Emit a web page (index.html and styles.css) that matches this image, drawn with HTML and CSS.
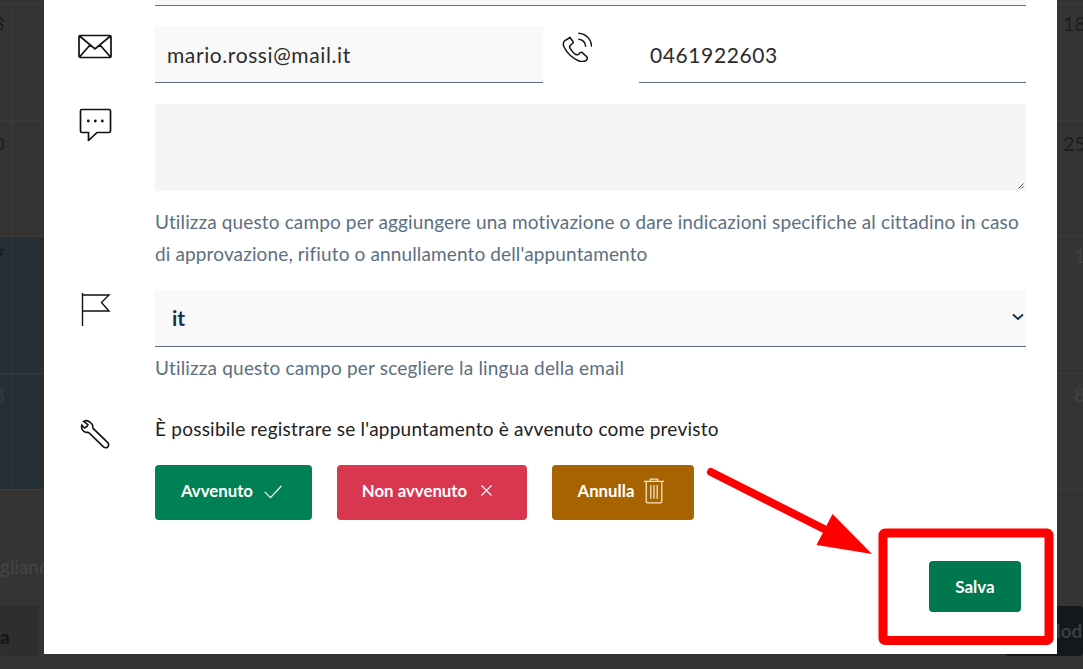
FILE: index.html
```html
<!DOCTYPE html>
<html lang="it">
<head>
<meta charset="utf-8">
<title>Appuntamento</title>
<link rel="stylesheet" href="styles.css">
</head>
<body>
<div class="page">
  <div class="backdrop">
    <div class="bg-table">
      <div class="bg-row r0"></div>
      <div class="bg-row r1"><div class="cell first"><span class="num">3</span></div><div class="cell second"></div><div class="cell last"><span class="num">18</span></div></div>
      <div class="bg-row r2"><div class="cell first"><span class="num">0</span></div><div class="cell second"></div><div class="cell last"><span class="num">25</span></div></div>
      <div class="bg-row r3"><div class="cell first blue"><span class="num">7</span></div><div class="cell second blue"></div><div class="cell last"><span class="num faint">1</span></div></div>
      <div class="bg-row r4"><div class="cell first blue"><span class="num faint-blue">8</span></div><div class="cell second blue"></div><div class="cell last"><span class="num faint">8</span></div></div>
    </div>
    <div class="bg-footer">
      <p class="bg-note">gliano</p>
      <div class="bg-actions">
        <div class="bg-btn left">a</div>
        <div class="bg-btn right">Modifica</div>
      </div>
    </div>
  </div>

  <div class="modal">
    <div class="field-tail"></div>

    <div class="row contact">
      <svg class="icon" viewBox="0 0 34 34"><path d="M2 6.500h30a1.300 1.300 0 0 1 1 1.200v19.600a1.300 1.300 0 0 1-1 1.200H2a1.300 1.300 0 0 1-1-1.200V7.700a1.300 1.300 0 0 1 1-1.200zM1.500 7l15.500 13L32.500 7M1.500 28l10.500-12M32.500 28L22 16"/></svg>
      <div class="input email">mario.rossi@mail.it</div>
      <svg class="icon phone" viewBox="0 0 30 30"><path d="M8 5.500 3 8.500C1 10 .8 12 2 15c3 6 8 11 15 14 3 1 6 .5 7.500-1 1-1 1-2 .5-3l-5-4.500c-1-.5-2 0-3 1.500-1 1-2 1-3 .5-3-1.500-6-5.500-6.500-8 0-1 1-1.500 2.500-2.500 1.500-1 1.500-1.500 1-2.500z"/><path d="M16.300 7.300c4.200.3 7.100 3.200 7.400 7.400M16.300 1.300c7.700.5 12.900 5.700 13.400 13.400"/></svg>
      <div class="input tel">0461922603</div>
    </div>

    <div class="row message">
      <svg class="icon" viewBox="0 0 34 34"><path d="M4 2.500h27a1.500 1.500 0 0 1 1.500 1.500v20a1.500 1.500 0 0 1-1.500 1.500H19l-8.500 8v-8H4A1.500 1.500 0 0 1 2.500 24V4A1.500 1.500 0 0 1 4 2.500z"/><circle class="dot" cx="10.300" cy="14" r="1.400"/><circle class="dot" cx="17.300" cy="14" r="1.400"/><circle class="dot" cx="24.300" cy="14" r="1.400"/></svg>
      <div class="body">
        <div class="textarea"><svg class="grip" viewBox="0 0 6 6"><path d="M5.500.5.500 5.500M5.500 3.500l-2 2"/></svg></div>
        <p class="help two-line">Utilizza questo campo per aggiungere una motivazione o dare indicazioni specifiche al cittadino in caso di approvazione, rifiuto o annullamento dell'appuntamento</p>
      </div>
    </div>

    <div class="row language">
      <svg class="icon flag" viewBox="0 0 34 34"><path d="M4.500 1v34M4.500 3H31l-7.500 7.500L31 19H4.500"/></svg>
      <div class="body">
        <div class="select"><span>it</span><svg class="chevron" viewBox="0 0 12 8"><path d="M1 1.500 6 6l5-4.500"/></svg></div>
        <p class="help">Utilizza questo campo per scegliere la lingua della email</p>
      </div>
    </div>

    <div class="row outcome">
      <svg class="icon" viewBox="-2 2 36 36"><path d="M11 5.500C9 3.800 6.200 3.200 4 4.500L8.500 8 7.500 10 5 11.500 2 8.500c-1 4 1.500 7 4 7.500 1.500.3 2.500 0 3.500.5l15.500 15c1.500 1.300 4 1.300 4.800-.3 1-1.500.7-3.300-.8-4.700L14 12c-.5-1-.5-1.800-.5-3 0-1-1-2.300-2.500-3.500z"/></svg>
      <div class="body">
        <p class="question">È possibile registrare se l'appuntamento è avvenuto come previsto</p>
        <div class="actions">
          <div class="btn green">Avvenuto <svg class="btn-icon" viewBox="0 0 24 24"><path d="M2 13l7 7L22 6"/></svg></div>
          <div class="btn red">Non avvenuto <svg class="btn-icon small" viewBox="0 0 24 24"><path d="M4 4l16 16M20 4 4 20"/></svg></div>
          <div class="btn amber">Annulla <svg class="btn-icon trash" viewBox="0 0 24 28"><path d="M1 4h22M8 4V1.500h8V4M3.500 4v22a1.500 1.500 0 0 0 1.500 1.500h14a1.500 1.500 0 0 0 1.500-1.500V4M8.500 8v15M12 8v15M15.500 8v15"/></svg></div>
        </div>
      </div>
    </div>

    <div class="footer"><div class="btn save">Salva</div></div>
  </div>

  <svg class="annotation" viewBox="0 0 1083 669">
    <path class="arrow-line" d="M711 472 830 532"/>
    <path class="arrow-head" d="M832.500 514 872 554 816.500 545z"/>
    <rect class="frame" x="883" y="533" width="166" height="107.500" rx="2"/>
  </svg>
</div>
</body>
</html>
```

FILE: styles.css
```css
* { box-sizing: border-box; }
html, body { margin: 0; padding: 0; height: 100%; }
body { font-family: "Lato", "Liberation Sans", sans-serif; overflow: hidden; background: #343434; }
p { margin: 0; }

.page { position: relative; width: 1083px; height: 669px; overflow: hidden; }

/* dimmed page behind the dialog */
.backdrop { display: flex; flex-direction: column; height: 100%; background: #343434; color: #1d1d1d; }
.bg-row { display: flex; justify-content: space-between; border-bottom: 1px solid #3b3b3b; }
.r0 { height: 5px; }
.r1 { height: 116px; }
.r2 { height: 116px; }
.r3 { height: 137px; }
.r4 { height: 116px; }
.cell { font-size: 20px; line-height: 24px; padding-top: 6px; overflow: hidden; }
.first { width: 12px; border-right: 1px solid #3a3a3a; }
.first .num { display: block; margin-left: -7px; }
.second { flex: 1; max-width: 600px; margin-right: auto; }
.last { width: 26px; white-space: nowrap; padding-left: 6px; }
.blue { background: #262e36; border-color: #2c343c; }
.faint { color: #424242; }
.faint-blue { color: #343c46; }
.r3 .last, .r4 .last { padding-left: 17px; }
.r4 .cell { padding-top: 8px; }
.r2 .cell { padding-top: 10px; }
.r1 .cell { padding-top: 6px; }
.bg-footer { flex: 1; display: flex; flex-direction: column; padding-top: 65px; }
.bg-note { font-size: 19px; line-height: 24px; color: #464646; }
.bg-actions { display: flex; justify-content: space-between; margin-top: 27px; }
.bg-btn { height: 50px; border-radius: 4px; font-size: 19px; font-weight: 700; }
.bg-btn.left { width: 39px; background: #2e2e2e; color: #141414; text-align: right; padding-right: 31px; line-height: 62px; }
.bg-btn.right { width: 78px; padding-left: 38px; background: #14181c; color: #3a3e42; white-space: nowrap; overflow: hidden; line-height: 50px; }

/* dialog */
.modal { position: absolute; left: 44px; top: 0; width: 1013px; height: 654px; background: #fff; padding: 0 31px 0 34px; color: #17324d; }
.field-tail { height: 6px; margin-left: 77px; background: #f9f9f9; border-bottom: 1px solid #5c6f82; }
.row { display: flex; align-items: flex-start; }
.icon { width: 34px; height: 34px; flex: none; fill: none; stroke: #111; stroke-width: 1.700; margin-right: 43px; }
.icon .dot { fill: #111; stroke: none; }
.body { flex: 1; min-width: 0; }

.contact { margin-top: 20px; }
.contact > .icon { margin-top: 3px; }
.input { height: 57px; border-bottom: 1px solid #5c6f82; font-size: 21px; line-height: 58px; padding-left: 12px; color: #2b2b2b; letter-spacing: .6px; }
.email { width: 388px; background: #f9f9f9; }
.contact > .phone { width: 30px; height: 30px; margin: 6px 47px 0 19px; stroke-width: 1.500; }
.tel { width: 387px; padding-left: 11px; background: #fff; }

.message { margin-top: 21px; }
.message > .icon { margin-top: 3px; }
.textarea { position: relative; height: 87px; background: #f5f5f5; }
.grip { position: absolute; right: 2px; bottom: 2px; width: 6px; height: 6px; fill: none; stroke: #555; stroke-width: 1; }
.help { font-size: 19px; line-height: 32px; letter-spacing: .18px; color: #5c6f82; }
.two-line { margin-top: 15px; letter-spacing: .13px; }

.language { margin-top: 20px; }
.language > .icon { margin-top: 2px; }
.flag { stroke-width: 1.400; }
.select { display: flex; align-items: center; justify-content: space-between; height: 57px; padding: 0 2px 2px 17px; background: #f9f9f9; border-bottom: 1px solid #5c6f82; font-size: 21px; font-weight: 700; color: #17324d; }
.chevron { width: 12px; height: 8px; fill: none; stroke: #17324d; stroke-width: 2; }
.language .help { margin-top: 5px; }

.outcome { margin-top: 29px; }
.outcome > .icon { margin-top: 6px; }
.question { font-size: 19px; line-height: 32px; letter-spacing: .23px; color: #222; }
.actions { display: flex; gap: 25px; margin-top: 20px; }

.btn { display: flex; align-items: center; justify-content: center; height: 55px; padding-bottom: 4px; border-radius: 4px; color: #fff; font-size: 16.800px; font-weight: 700; white-space: pre; }
.btn-icon { width: 20px; height: 20px; margin-left: 6px; fill: none; stroke: #fff; stroke-width: 1.400; }
.btn-icon.small { width: 15px; height: 15px; margin-left: 8px; stroke-width: 1.800; }
.btn-icon.trash { width: 22px; height: 27px; stroke: #f5e6c8; margin-left: 5px; }
.green { width: 157px; padding-right: 3px; background: #008055; }
.red { width: 190px; padding-right: 8px; background: #d9364f; }
.amber { width: 142px; padding-right: 3px; background: #a66300; }

.footer { display: flex; justify-content: flex-end; margin-top: 41px; padding-right: 5px; }
.save { width: 92px; height: 51px; padding-bottom: 0; font-size: 17px; background: #00774f; }

/* red markup drawn over the screenshot */
.annotation { position: absolute; left: 0; top: 0; width: 1083px; height: 669px; pointer-events: none; }
.arrow-line { fill: none; stroke: #f00; stroke-width: 8; stroke-linecap: round; }
.arrow-head { fill: #f00; }
.frame { fill: none; stroke: #f00; stroke-width: 9; }
```
